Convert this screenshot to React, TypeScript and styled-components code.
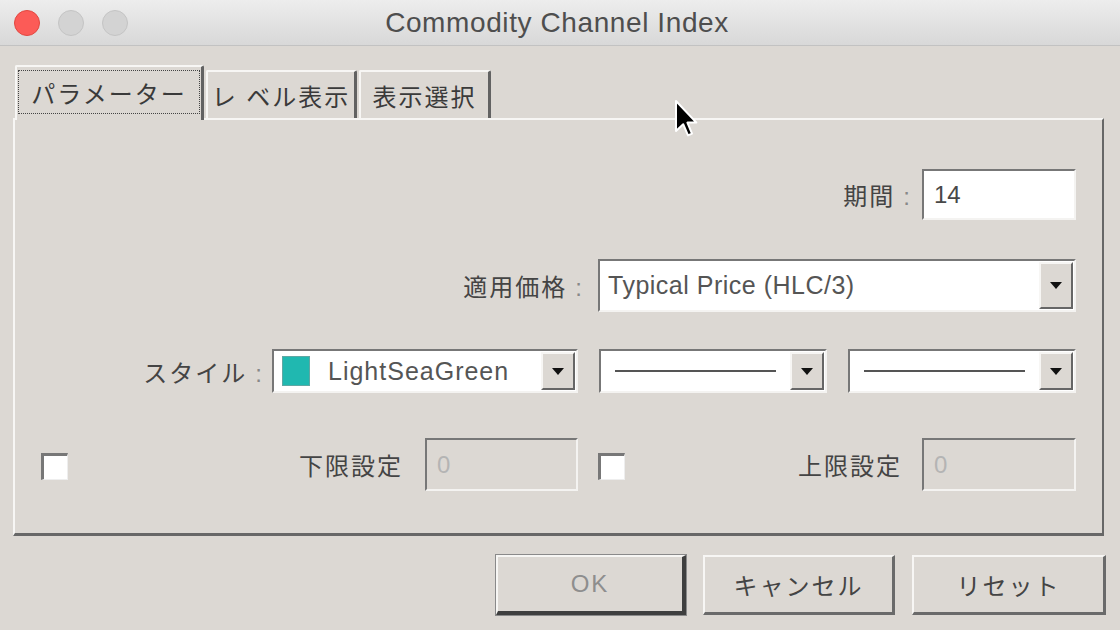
import styled, { createGlobalStyle } from "styled-components"

const Global = createGlobalStyle`
    html, body {
        margin: 0;
        padding: 0;
        background: #dcd8d3;
        overflow: hidden;
    }
    * {
        box-sizing: border-box;
    }
`

const jp = `"Liberation Sans", "Noto Sans CJK JP", sans-serif`

const Window = styled.div`
    position: relative;
    width: 1120px;
    height: 630px;
    background: #dcd8d3;
    display: flex;
    flex-direction: column;
    font-family: ${jp};
    color: #444;
`

const TitleBar = styled.div`
    height: 46px;
    flex-shrink: 0;
    display: grid;
    grid-template-columns: 1fr auto 1fr;
    align-items: center;
    background: linear-gradient(#ededed, #d8d8d8);
    border-bottom: 1px solid #c2c2c2;
`

const Lights = styled.div`
    display: flex;
    gap: 18px;
    padding-left: 14px;
`

const Light = styled.span<{ $color: string }>`
    width: 26px;
    height: 26px;
    border-radius: 50%;
    background: ${p => p.$color};
    border: 1px solid ${p => (p.$color === "#fc5b57" ? "#e2463f" : "#c4c4c4")};
`

const Title = styled.div`
    font-family: "Liberation Sans", sans-serif;
    font-size: 28px;
    letter-spacing: 0.6px;
    color: #4e4e4e;
    padding-right: 6px;
`

const Body = styled.div`
    flex: 1;
    display: flex;
    flex-direction: column;
    padding: 19px 16px 0 13px;
`

const TabStrip = styled.div`
    display: flex;
    align-items: flex-end;
    padding-left: 2px;
    height: 53px;
`

const Tab = styled.div<{ $active?: boolean; $w: number }>`
    position: relative;
    z-index: ${p => (p.$active ? 2 : 1)};
    width: ${p => p.$w}px;
    height: ${p => (p.$active ? 55 : 48)}px;
    margin-bottom: ${p => (p.$active ? -2 : 0)}px;
    margin-right: 2px;
    background: #dcd8d3;
    border-top: 2px solid #f7f6f4;
    border-left: 2px solid #f7f6f4;
    border-right: 3px solid #626262;
    border-radius: 2px 2px 0 0;
    display: flex;
    align-items: ${p => (p.$active ? "flex-start" : "center")};
    justify-content: center;
    padding-top: ${p => (p.$active ? 3 : 0)}px;
    font-size: 24px;
    letter-spacing: 2px;
    color: #3a3a3a;
`

const Focus = styled.span`
    border: 1px dotted #444;
    width: 182px;
    height: 44px;
    display: flex;
    align-items: center;
    justify-content: center;
`

const Panel = styled.div`
    height: 418px;
    border-top: 2px solid #f7f6f4;
    border-left: 2px solid #f7f6f4;
    border-right: 2px solid #676767;
    border-bottom: 3px solid #676767;
    display: flex;
    flex-direction: column;
    padding-right: 26px;
`

const Row = styled.div<{ $top: number; $h: number }>`
    margin-top: ${p => p.$top}px;
    height: ${p => p.$h}px;
    display: flex;
    align-items: center;
    justify-content: flex-end;
`

const Label = styled.span<{ $gap?: number }>`
    font-size: 24px;
    letter-spacing: 2px;
    color: #444;
    margin-right: ${p => p.$gap ?? 0}px;
    white-space: nowrap;
`

const Colon = styled.span`
    margin-left: 8px;
    color: #888;
`

const Sunken = styled.div<{ $w: number; $off?: boolean }>`
    width: ${p => p.$w}px;
    height: 100%;
    background: ${p => (p.$off ? "#dcd8d3" : "#fff")};
    border-top: 2px solid #777;
    border-left: 2px solid #777;
    border-right: 2px solid #f4f3f1;
    border-bottom: 2px solid #f4f3f1;
    display: flex;
    align-items: center;
    flex-shrink: 0;
`

const FieldText = styled.span<{ $off?: boolean }>`
    font-family: "Liberation Sans", sans-serif;
    font-size: 24px;
    color: ${p => (p.$off ? "#b4b4b4" : "#484848")};
    padding-left: 10px;
    flex: 1;
`

const ComboText = styled.span<{ $spacing?: number; $pad?: number }>`
    font-family: "Liberation Sans", sans-serif;
    font-size: 25px;
    letter-spacing: ${p => p.$spacing ?? 0.5}px;
    color: #555;
    padding-left: ${p => p.$pad ?? 8}px;
    flex: 1;
    white-space: nowrap;
`

const Swatch = styled.span`
    width: 28px;
    height: 30px;
    margin: 0 18px 0 8px;
    background: #20b8b0;
    border: 1px solid #5fa7a3;
    flex-shrink: 0;
`

const LineSample = styled.span`
    flex: 1;
    height: 2px;
    background: #555;
    margin: 0 14px;
`

const Arrow = styled.div`
    width: 34px;
    height: calc(100% - 2px);
    margin-right: 1px;
    background: #dcd8d3;
    border-top: 2px solid #f7f6f4;
    border-left: 2px solid #f7f6f4;
    border-right: 2px solid #666;
    border-bottom: 2px solid #666;
    display: flex;
    align-items: center;
    justify-content: center;
    &::after {
        content: "";
        border-left: 6px solid transparent;
        border-right: 6px solid transparent;
        border-top: 7px solid #111;
    }
`

const Gap = styled.span<{ $w: number }>`
    width: ${p => p.$w}px;
    flex-shrink: 0;
`

const Group = styled.div<{ $w: number; $pad?: number }>`
    width: ${p => p.$w}px;
    height: 100%;
    display: flex;
    align-items: center;
    padding-left: ${p => p.$pad ?? 0}px;
    flex-shrink: 0;
`

const Check = styled.span`
    width: 27px;
    height: 27px;
    margin-top: 3px;
    background: #fff;
    border-top: 3px solid #777;
    border-left: 3px solid #777;
    border-right: 1px solid #eee;
    border-bottom: 1px solid #eee;
    margin-right: auto;
    flex-shrink: 0;
`

const Buttons = styled.div`
    display: flex;
    justify-content: flex-end;
    gap: 17px;
    margin-top: 19px;
    margin-right: -2px;
`

const Button = styled.div<{ $w: number; $default?: boolean }>`
    width: ${p => p.$w}px;
    height: 60px;
    background: #dcd8d3;
    border-top: 2px solid #f7f6f4;
    border-left: 2px solid #f7f6f4;
    border-right: ${p => (p.$default ? "4px solid #3f3f3f" : "3px solid #6a6a6a")};
    border-bottom: ${p => (p.$default ? "4px solid #3f3f3f" : "3px solid #6a6a6a")};
    outline: ${p => (p.$default ? "1px solid #8a8a8a" : "none")};
    display: flex;
    align-items: center;
    justify-content: center;
    font-size: 24px;
    letter-spacing: 2px;
    color: ${p => (p.$default ? "#8e8e8e" : "#444")};
`

const Cursor = styled.svg`
    position: absolute;
    left: 674px;
    top: 99px;
`

function Combo({ w, children }: { w: number; children: React.ReactNode }) {
    return (
        <Sunken $w={w}>
            {children}
            <Arrow />
        </Sunken>
    )
}

export default function App() {
    return (
        <Window>
            <Global />
            <TitleBar>
                <Lights>
                    <Light $color="#fc5b57" />
                    <Light $color="#d3d3d3" />
                    <Light $color="#d3d3d3" />
                </Lights>
                <Title>Commodity Channel Index</Title>
                <div />
            </TitleBar>
            <Body>
                <TabStrip>
                    <Tab $active $w={189}>
                        <Focus>パラメーター</Focus>
                    </Tab>
                    <Tab $w={151}>レ ベル表示</Tab>
                    <Tab $w={132}>表示選択</Tab>
                </TabStrip>
                <Panel>
                    <Row $top={49} $h={51}>
                        <Label $gap={10}>
                            期間<Colon>:</Colon>
                        </Label>
                        <Sunken $w={154}>
                            <FieldText>14</FieldText>
                        </Sunken>
                    </Row>
                    <Row $top={39} $h={53}>
                        <Label $gap={14}>
                            適用価格<Colon>:</Colon>
                        </Label>
                        <Combo w={478}>
                            <ComboText>Typical Price (HLC/3)</ComboText>
                        </Combo>
                    </Row>
                    <Row $top={37} $h={44}>
                        <Label $gap={8}>
                            スタイル<Colon>:</Colon>
                        </Label>
                        <Combo w={306}>
                            <Swatch />
                            <ComboText $pad={0} $spacing={1}>LightSeaGreen</ComboText>
                        </Combo>
                        <Gap $w={21} />
                        <Combo w={228}>
                            <LineSample />
                        </Combo>
                        <Gap $w={21} />
                        <Combo w={228}>
                            <LineSample />
                        </Combo>
                    </Row>
                    <Row $top={45} $h={53}>
                        <Group $w={563} $pad={26}>
                            <Check />
                            <Label $gap={22}>下限設定</Label>
                            <Sunken $w={153} $off>
                                <FieldText $off>0</FieldText>
                            </Sunken>
                        </Group>
                        <Gap $w={20} />
                        <Group $w={478}>
                            <Check />
                            <Label $gap={20}>上限設定</Label>
                            <Sunken $w={154} $off>
                                <FieldText $off>0</FieldText>
                            </Sunken>
                        </Group>
                    </Row>
                </Panel>
                <Buttons>
                    <Button $w={190} $default>OK</Button>
                    <Button $w={192}>キャンセル</Button>
                    <Button $w={194}>リセット</Button>
                </Buttons>
            </Body>
            <Cursor width="24" height="40" viewBox="0 0 12 20">
                <path d="M1 1 L1 16 L4.6 12.6 L7 18.2 L9 17.3 L6.7 11.8 L11.2 11.8 Z" fill="#000" stroke="#fff" strokeWidth="1" strokeLinejoin="round" />
            </Cursor>
        </Window>
    )
}
